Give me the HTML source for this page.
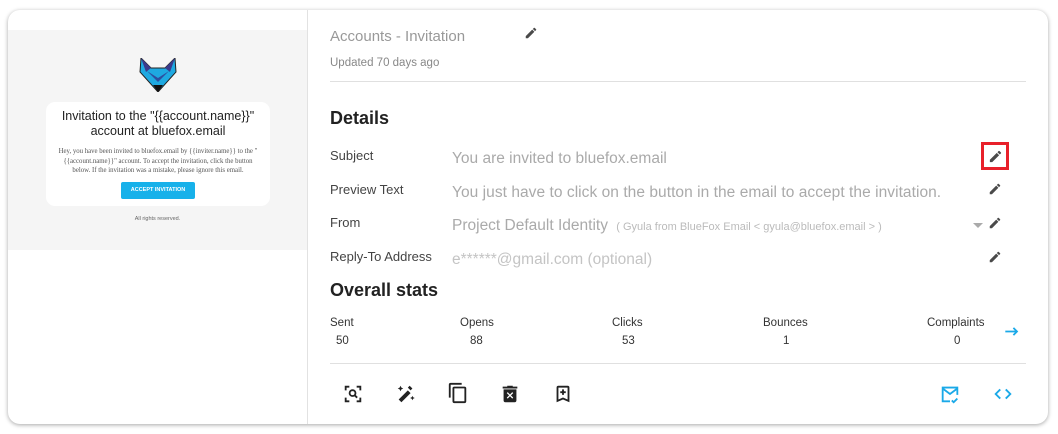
<!DOCTYPE html>
<html><head><meta charset="utf-8"><style>
body{margin:0;width:1058px;height:434px;background:#fff;font-family:"Liberation Sans",sans-serif;position:relative;overflow:hidden}
.card{position:absolute;left:8px;top:10px;width:1040px;height:414px;border-radius:12px;box-shadow:0 1px 4px rgba(0,0,0,.35);background:#fff;overflow:hidden}
.a{position:absolute;white-space:nowrap}
.lbl{font-size:13px;color:#444}
.val{font-size:15.5px;color:#aaa}
svg.p{position:absolute;width:15px;height:15px;fill:#4a4a4a}
.sl{font-size:11.5px;color:#333}
.ic{position:absolute;width:22px;height:22px}
</style></head><body>
<div class="card">
 <div class="a" style="left:0;top:20px;width:299px;height:220px;background:#f5f5f5"></div>
 <div class="a" style="left:299px;top:0;width:1px;height:414px;background:#e2e2e2"></div>
 <svg class="a" style="left:131px;top:48px" width="38" height="34" viewBox="0 0 38 34">
  <polygon points="2,0 12,10 26,10 36,0 37,14 19,34 1,14" fill="#1ea9e1" stroke="#222" stroke-width="1"/>
  <polygon points="2,0 12,10 7,14" fill="#3a3a8c"/><polygon points="36,0 26,10 31,14" fill="#3a3a8c"/>
  <polygon points="8,13 19,20 30,13 19,24" fill="#2d4fa0"/>
  <polygon points="14,27 19,34 24,27" fill="#111"/>
 </svg>
 <div class="a" style="left:38px;top:92px;width:224px;height:104px;background:#fff;border-radius:9px"></div>
 <div class="a" style="left:38px;top:99px;width:224px;text-align:center;font-size:12.5px;line-height:15px;color:#222;white-space:normal">Invitation to the "{{account.name}}" account at bluefox.email</div>
 <div class="a" style="left:46px;top:137px;width:208px;text-align:center;font-family:'Liberation Serif',serif;font-size:6.8px;line-height:9.5px;color:#555;white-space:normal">Hey, you have been invited to bluefox.email by {{inviter.name}} to the "{{account.name}}" account. To accept the invitation, click the button below. If the invitation was a mistake, please ignore this email.</div>
 <div class="a" style="left:113px;top:172px;width:74px;height:17px;background:#17b1ea;border-radius:2px;color:#fff;font-size:5.5px;font-weight:bold;text-align:center;line-height:17px">ACCEPT INVITATION</div>
 <div class="a" style="left:0;top:206px;width:299px;text-align:center;font-size:5.5px;color:#666">All rights reserved.</div>

 <div class="a" style="left:322px;top:18px;font-size:15px;color:#999">Accounts - Invitation</div>
 <svg class="p" style="left:516px;top:16px;width:14px;height:14px" viewBox="0 0 24 24"><path d="M3 17.25V21h3.75L17.81 9.94l-3.75-3.75L3 17.25zM20.71 7.04a1 1 0 000-1.41l-2.34-2.34a1 1 0 00-1.41 0l-1.83 1.83 3.75 3.75 1.83-1.83z"/></svg>
 <div class="a" style="left:322px;top:47px;font-size:11.5px;color:#888">Updated 70 days ago</div>
 <div class="a" style="left:322px;top:71px;width:696px;height:1px;background:#e0e0e0"></div>
 <div class="a" style="left:322px;top:98px;font-size:18px;font-weight:bold;color:#222">Details</div>

 <div class="a lbl" style="left:322px;top:138px">Subject</div>
 <div class="a val" style="left:444px;top:140px">You are invited to bluefox.email</div>
 <div class="a" style="left:973px;top:132px;width:28px;height:28px;box-sizing:border-box;border:3px solid #e8202a"></div>
 <svg class="p" style="left:980px;top:139px" viewBox="0 0 24 24"><path d="M3 17.25V21h3.75L17.81 9.94l-3.75-3.75L3 17.25zM20.71 7.04a1 1 0 000-1.41l-2.34-2.34a1 1 0 00-1.41 0l-1.83 1.83 3.75 3.75 1.83-1.83z"/></svg>

 <div class="a lbl" style="left:322px;top:172px">Preview Text</div>
 <div class="a val" style="left:444px;top:174px;letter-spacing:.05px">You just have to click on the button in the email to accept the invitation.</div>
 <svg class="p" style="left:980px;top:172px;width:14px;height:14px" viewBox="0 0 24 24"><path d="M3 17.25V21h3.75L17.81 9.94l-3.75-3.75L3 17.25zM20.71 7.04a1 1 0 000-1.41l-2.34-2.34a1 1 0 00-1.41 0l-1.83 1.83 3.75 3.75 1.83-1.83z"/></svg>

 <div class="a lbl" style="left:322px;top:205px">From</div>
 <div class="a val" style="left:444px;top:207px">Project Default Identity <span style="font-size:11px;color:#bbb;margin-left:4px">( Gyula from BlueFox Email &lt; gyula@bluefox.email &gt; )</span></div>
 <div class="a" style="left:965px;top:213px;width:0;height:0;border-left:5px solid transparent;border-right:5px solid transparent;border-top:5px solid #aaa"></div>
 <svg class="p" style="left:980px;top:206px;width:14px;height:14px" viewBox="0 0 24 24"><path d="M3 17.25V21h3.75L17.81 9.94l-3.75-3.75L3 17.25zM20.71 7.04a1 1 0 000-1.41l-2.34-2.34a1 1 0 00-1.41 0l-1.83 1.83 3.75 3.75 1.83-1.83z"/></svg>

 <div class="a lbl" style="left:322px;top:239px">Reply-To Address</div>
 <div class="a val" style="left:444px;top:241px;color:#c4c4c4">e******@gmail.com (optional)</div>
 <svg class="p" style="left:980px;top:240px;width:14px;height:14px" viewBox="0 0 24 24"><path d="M3 17.25V21h3.75L17.81 9.94l-3.75-3.75L3 17.25zM20.71 7.04a1 1 0 000-1.41l-2.34-2.34a1 1 0 00-1.41 0l-1.83 1.83 3.75 3.75 1.83-1.83z"/></svg>

 <div class="a" style="left:322px;top:270px;font-size:18px;font-weight:bold;color:#222">Overall stats</div>
 <div class="a sl" style="left:322px;top:307px">Sent</div><div class="a sl" style="left:328px;top:325px">50</div>
 <div class="a sl" style="left:452px;top:307px">Opens</div><div class="a sl" style="left:462px;top:325px">88</div>
 <div class="a sl" style="left:604px;top:307px">Clicks</div><div class="a sl" style="left:614px;top:325px">53</div>
 <div class="a sl" style="left:755px;top:307px">Bounces</div><div class="a sl" style="left:775px;top:325px">1</div>
 <div class="a sl" style="left:919px;top:307px">Complaints</div><div class="a sl" style="left:946px;top:325px">0</div>
 <svg class="a" style="left:997px;top:317px" width="15" height="9" viewBox="0 0 16 10"><path d="M0 5h13M9 1l4 4-4 4" stroke="#1aa9e8" stroke-width="2" fill="none"/></svg>
 <div class="a" style="left:322px;top:353px;width:696px;height:1px;background:#e0e0e0"></div>

 <svg class="ic" style="left:334px;top:373px" viewBox="0 0 24 24" fill="#222"><path d="M3 3h5v2H5v3H3zM16 3h5v5h-2V5h-3zM3 16h2v3h3v2H3zM19 16h2v5h-5v-2h3z"/><circle cx="11.5" cy="11" r="3.2" fill="none" stroke="#222" stroke-width="2"/><path d="M13.5 13l3 3" stroke="#222" stroke-width="2"/></svg>
 <svg class="ic" style="left:387px;top:373px" viewBox="0 0 24 24" fill="#222"><path d="M4 18l10-10 3 3-10 10z"/><path d="M6 3l1 2 2 1-2 1-1 2-1-2-2-1 2-1zM19 14l.8 1.6 1.7.8-1.7.8-.8 1.6-.8-1.6-1.7-.8 1.7-.8zM16 3l3 3-2 2-3-3z"/></svg>
 <svg class="ic" style="left:439px;top:372px" viewBox="0 0 24 24" fill="#222"><path d="M16 1H4a2 2 0 00-2 2v14h2V3h12zm3 4H8a2 2 0 00-2 2v14a2 2 0 002 2h11a2 2 0 002-2V7a2 2 0 00-2-2zm0 16H8V7h11z"/></svg>
 <svg class="ic" style="left:491px;top:373px" viewBox="0 0 24 24" fill="#222"><path d="M15 4V3H9v1H4v2h16V4zM5 7v12a2 2 0 002 2h10a2 2 0 002-2V7zm9.5 10L12 14.5 9.5 17l-1-1 2.5-2.5L8.5 11l1-1 2.5 2.5 2.5-2.5 1 1-2.5 2.5 2.5 2.5z"/></svg>
 <svg class="ic" style="left:544px;top:373px" viewBox="0 0 24 24" fill="#222"><path d="M17 3H7a2 2 0 00-2 2v16l7-3 7 3V5a2 2 0 00-2-2zm0 15l-5-2.2L7 18V5h10z"/><path d="M11 7h2v2h2v2h-2v2h-2v-2H9V9h2z"/></svg>
 <svg class="ic" style="left:931px;top:373px" viewBox="0 0 24 24" fill="none" stroke="#1aa9e8" stroke-width="2"><path d="M12 20H4V5h16v8"/><path d="M4 6l8 6 8-6"/><path d="M14 19l2 2 4-4"/></svg>
 <svg class="ic" style="left:984px;top:373px" viewBox="0 0 24 24" fill="none" stroke="#1aa9e8" stroke-width="2"><path d="M9 7l-5 5 5 5M15 7l5 5-5 5"/></svg>
</div>
</body></html>
